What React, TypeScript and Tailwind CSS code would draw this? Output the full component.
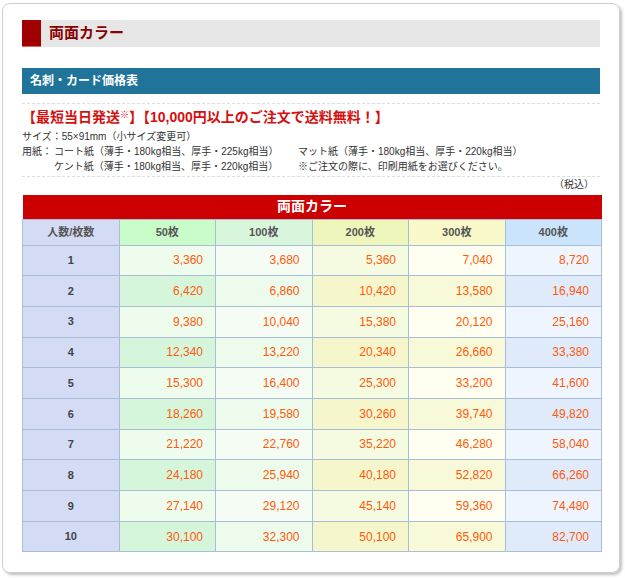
const cols = ["50枚", "100枚", "200枚", "300枚", "400枚"];
const headBg = ["bg-[#c9fcc9]", "bg-[#d8f6dc]", "bg-[#eff6bc]", "bg-[#f8f8c8]", "bg-[#c9e4fb]"];
const oddBg = ["bg-[#eefcee]", "bg-[#f4fcf4]", "bg-[#f4fbe0]", "bg-[#fefff0]", "bg-[#eef5fe]"];
const evenBg = ["bg-[#d6f6dc]", "bg-[#ecfbec]", "bg-[#f6f6cc]", "bg-[#f8f9d8]", "bg-[#dfebfb]"];
const data = [
  [3360, 3680, 5360, 7040, 8720],
  [6420, 6860, 10420, 13580, 16940],
  [9380, 10040, 15380, 20120, 25160],
  [12340, 13220, 20340, 26660, 33380],
  [15300, 16400, 25300, 33200, 41600],
  [18260, 19580, 30260, 39740, 49820],
  [21220, 22760, 35220, 46280, 58040],
  [24180, 25940, 40180, 52820, 66260],
  [27140, 29120, 45140, 59360, 74480],
  [30100, 32300, 50100, 65900, 82700],
];
const f = { fontFamily: '"Liberation Sans", "Noto Sans CJK JP", sans-serif' };

export default function App() {
  return (
    <div className="w-[625px] h-[578px] bg-white pt-[3px] pl-[2px]" style={f}>
      <div className="w-[618px] h-[570px] rounded-[8px] border border-[#cfcfcf] shadow-[2px_2px_3px_rgba(0,0,0,0.25)] px-[19px] pt-[16px]">
        <div className="flex h-[27px] bg-[#e6e6e6] items-center">
          <div className="w-[19px] h-full bg-[#a00000] border-b border-[#e06060]" />
          <div className="ml-[8px] text-[15px] font-bold text-[#8b0000]">両面カラー</div>
        </div>
        <div className="mt-[21px] h-[26px] bg-[#20749a] flex items-center pl-[8px] text-white font-bold text-[12px]">名刺・カード価格表</div>
        <div className="mt-[9px] border-t border-dashed border-[#ddd]" />
        <div className="mt-[3px] text-[#d51010] font-bold text-[14px] leading-[20px] whitespace-nowrap">【最短当日発送<sup className="text-[9px]">※</sup>】【10,000円以上のご注文で送料無料！】</div>
        <div className="mt-[2px] text-[10px] leading-[15px] text-[#333] whitespace-nowrap">
          <div>サイズ：55×91mm（小サイズ変更可）</div>
          <div className="flex"><span className="w-[32px]">用紙：</span><span className="w-[244px]">コート紙（薄手・180kg相当、厚手・225kg相当）</span><span>マット紙（薄手・180kg相当、厚手・220kg相当）</span></div>
          <div className="flex"><span className="w-[32px]"></span><span className="w-[244px]">ケント紙（薄手・180kg相当、厚手・220kg相当）</span><span>※ご注文の際に、印刷用紙をお選びください。</span></div>
        </div>
        <div className="mt-[2px] border-t border-dashed border-[#ddd]" />
        <div className="text-right text-[10px] leading-[15px] pr-[6px] text-[#333]">（税込）</div>
        <table className="mt-[3px] w-[580px] border-collapse text-[11px] table-fixed">
          <thead>
            <tr>
              <th colSpan={6} className="h-[24px] bg-[#cc0000] text-white text-[14px] font-bold">両面カラー</th>
            </tr>
            <tr className="h-[26px] text-[#555] font-bold">
              <th className="w-[92px] bg-[#d3dcf4] border border-[#a9bdd6]">人数/枚数</th>
              {cols.map((c, i) => (
                <th key={c} className={`border border-[#a9bdd6] ${headBg[i]}`}>{c}</th>
              ))}
            </tr>
          </thead>
          <tbody>
            {data.map((r, ri) => (
              <tr key={ri} className="h-[30.7px]">
                <td className="bg-[#d3dcf4] border border-[#a9bdd6] text-center font-bold text-[#444]">{ri + 1}</td>
                {r.map((v, i) => (
                  <td key={i} className={`border border-[#a9bdd6] text-right pr-[12px] text-[12px] text-[#ff5a0a] ${ri % 2 ? evenBg[i] : oddBg[i]}`}>{v.toLocaleString("en-US")}</td>
                ))}
              </tr>
            ))}
          </tbody>
        </table>
      </div>
    </div>
  );
}
